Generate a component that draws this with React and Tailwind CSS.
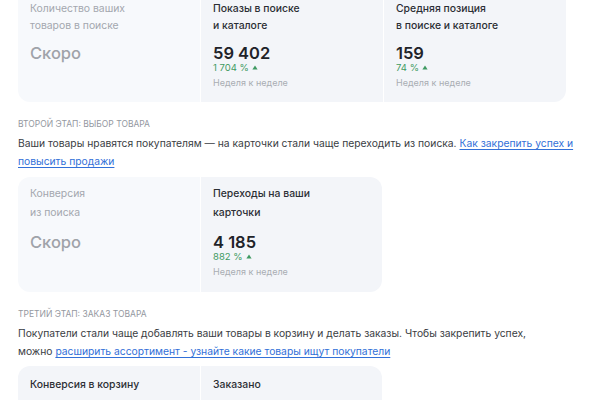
import React from 'react';

const Trend = ({ value }) => (
  <div className="flex items-center gap-[3px] text-[9.5px] leading-[12px] text-[#3f9a62]">
    <span>{value}</span>
    <svg width="6" height="5" viewBox="0 0 6 5" className="mb-[1px]">
      <path d="M3 0.5 L5.6 4.5 L0.4 4.5 Z" fill="#3f9a62" />
    </svg>
  </div>
);

const Section = ({ title, children }) => (
  <div className="mt-[15px]">
    <div className="text-[8.5px] leading-[14px] uppercase text-[#94989f]">{title}</div>
    <p className="mt-[3px] text-[10.3px] leading-[18px] text-[#3a3d43]">{children}</p>
  </div>
);

const Link = ({ children }) => (
  <a href="#" className="text-[#3270d8] underline underline-offset-2">{children}</a>
);

const labelMuted = 'text-[10.4px] text-[#a3a7ae]';
const labelDark = 'text-[10.4px] font-medium text-[#2b2e34]';
const soon = 'text-[16.5px] leading-[18px] font-medium text-[#9fa3a9]';
const number = 'text-[16.5px] leading-[18px] font-semibold text-[#1f2329]';
const week = 'mt-[3px] text-[9px] leading-[12px] text-[#a9adb3]';

export default function App() {
  return (
    <div className="w-[600px] h-[400px] overflow-hidden bg-white px-[18px]" style={{ fontFamily: 'Inter, "Noto Sans", sans-serif' }}>
      <div className="-mt-[10px] flex w-[548px] rounded-b-[12px] overflow-hidden">
        <div className="w-[182px] pt-[10px] pb-[13px] px-3 bg-[#f7f9fc]">
          <div className={`${labelMuted} leading-[17px]`}>Количество ваших<br />товаров в поиске</div>
          <div className={`mt-[10px] ${soon}`}>Скоро</div>
        </div>
        <div className="w-[183px] pt-[10px] pb-[13px] px-3 bg-[#f3f5f9] border-l border-white">
          <div className={`${labelDark} leading-[17px]`}>Показы в поиске<br />и каталоге</div>
          <div className={`mt-[10px] ${number}`}>59 402</div>
          <Trend value="1 704 %" />
          <div className={week}>Неделя к неделе</div>
        </div>
        <div className="w-[183px] pt-[10px] pb-[13px] px-3 bg-[#f3f5f9] border-l border-white">
          <div className={`${labelDark} leading-[17px]`}>Средняя позиция<br />в поиске и каталоге</div>
          <div className={`mt-[10px] ${number}`}>159</div>
          <Trend value="74 %" />
          <div className={week}>Неделя к неделе</div>
        </div>
      </div>

      <Section title="Второй этап: выбор товара">
        Ваши товары нравятся покупателям — на карточки стали чаще переходить из поиска.{' '}
        <Link>Как закрепить успех и повысить продажи</Link>
      </Section>

      <div className="mt-[7px] flex w-[364px] rounded-[12px] overflow-hidden">
        <div className="w-[182px] pt-[7px] pb-[14px] px-3 bg-[#f7f9fc]">
          <div className={`${labelMuted} leading-[19px]`}>Конверсия<br />из поиска</div>
          <div className={`mt-[11px] ${soon}`}>Скоро</div>
        </div>
        <div className="w-[182px] pt-[7px] pb-[14px] px-3 bg-[#f3f5f9] border-l border-white">
          <div className={`${labelDark} leading-[19px]`}>Переходы на ваши<br />карточки</div>
          <div className={`mt-[11px] ${number}`}>4 185</div>
          <Trend value="882 %" />
          <div className={week}>Неделя к неделе</div>
        </div>
      </div>

      <Section title="Третий этап: заказ товара">
        Покупатели стали чаще добавлять ваши товары в корзину и делать заказы. Чтобы закрепить успех,
        <br />
        можно <Link>расширить ассортимент - узнайте какие товары ищут покупатели</Link>
      </Section>

      <div className="mt-[6px] flex w-[364px] rounded-[12px] overflow-hidden">
        <div className="w-[182px] pt-[9px] pb-[13px] px-3 bg-[#f3f5f9]">
          <div className={`${labelDark} leading-[19px]`}>Конверсия в корзину<br />из карточки товара</div>
        </div>
        <div className="w-[182px] pt-[9px] pb-[13px] px-3 bg-[#f3f5f9] border-l border-white">
          <div className={`${labelDark} leading-[19px]`}>Заказано<br />товаров</div>
        </div>
      </div>
    </div>
  );
}
